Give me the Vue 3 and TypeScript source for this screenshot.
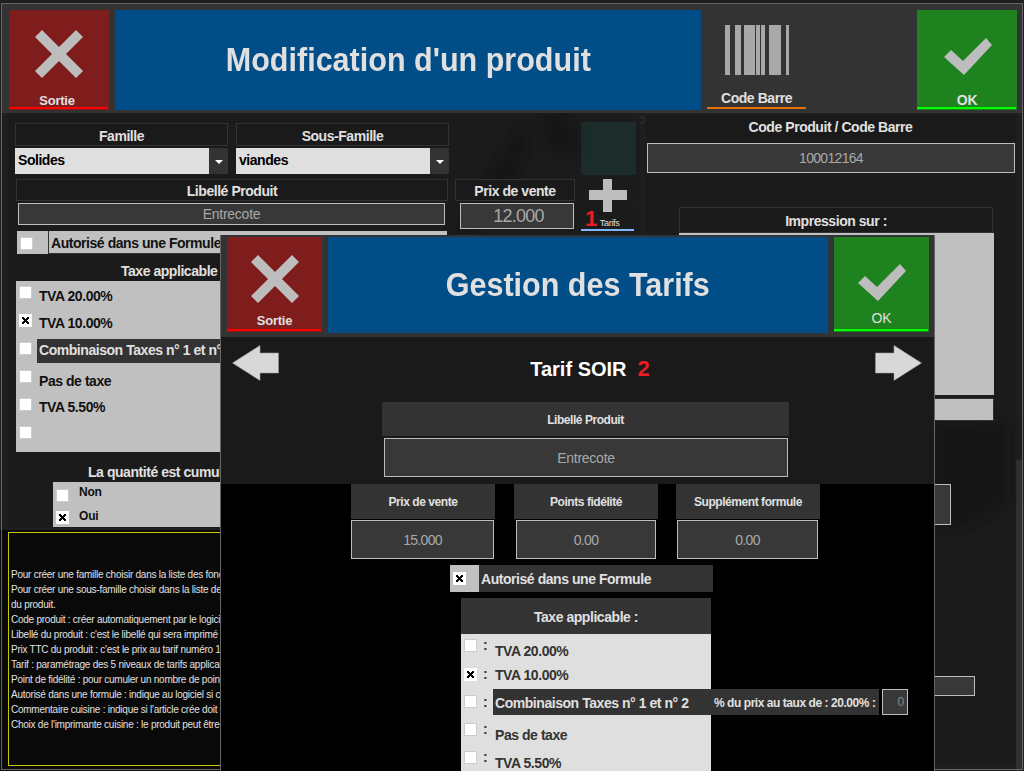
<script setup lang="ts">
interface TaxRow {
  label: string;
  checked?: boolean;
  dark?: boolean;
  dy: number;
}
interface TarifRow {
  label: string;
  checked?: boolean;
  combo?: boolean;
  height: number;
  dy: number;
  colon: number;
}

// pixel cross of the old windows checkbox
const crossPath =
  "M0 0h2v1h1v1h1V1h1V0h2v2H6v1H5v1h1v1h1v2H5V6H4V5H3v1H2v1H0V5h1V4h1V3H1V2H0z";

const taxes: TaxRow[] = [
  { label: "TVA 20.00%", dy: 2 },
  { label: "TVA 10.00%", checked: true, dy: 1 },
  { label: "Combinaison Taxes n° 1 et n° 2", dark: true, dy: -3 },
  { label: "Pas de taxe", dy: 3 },
  { label: "TVA 5.50%", dy: 1 },
  { label: "", dy: 1 },
];

const tarifTaxes: TarifRow[] = [
  { label: "TVA 20.00%", height: 29, dy: 4, colon: -2 },
  { label: "TVA 10.00%", checked: true, height: 27, dy: -1, colon: -2 },
  { label: "Combinaison Taxes n° 1 et n° 2", combo: true, height: 28, dy: -6, colon: -1 },
  { label: "Pas de taxe", height: 28, dy: 4, colon: -2 },
  { label: "TVA 5.50%", height: 28, dy: 4, colon: -2 },
];

const tarifFields = [
  { label: "Prix de vente", value: "15.000", cls: "f1" },
  { label: "Points fidélité", value: "0.00", cls: "f2" },
  { label: "Supplément formule", value: "0.00", cls: "f3" },
];

const helpLines = [
  "Pour créer une famille choisir dans la liste des fonctions",
  "Pour créer une sous-famille choisir dans la liste des familles",
  "du produit.",
  "Code produit : créer automatiquement par le logiciel",
  "Libellé du produit : c'est le libellé qui sera imprimé sur le ticket",
  "Prix TTC du produit : c'est le prix au tarif numéro 1",
  "Tarif : paramétrage des 5 niveaux de tarifs applicables",
  "Point de fidélité : pour cumuler un nombre de points",
  "Autorisé dans une formule : indique au logiciel si ce produit",
  "Commentaire cuisine : indique si l'article crée doit être commenté",
  "Choix de l'imprimante cuisine : le produit peut être imprimé",
];

const bars = [
  [0, 5],
  [10, 6],
  [19, 11],
  [31, 4],
  [36, 4],
  [44, 12],
  [61, 3],
];
</script>

<template>
  <div class="screen">
    <svg class="backdrop" width="1024" height="771" viewBox="0 0 1024 771">
      <defs>
        <filter id="soft"><feGaussianBlur stdDeviation="5" /></filter>
      </defs>
      <rect width="1024" height="771" fill="#1e1e1e" />
      <rect y="530" width="640" height="241" fill="#090909" />
      <rect x="1016" y="460" width="6" height="311" fill="#303030" />
      <g filter="url(#soft)" fill="#0c0c0c">
        <path d="M455 235 C480 190 495 150 520 125 C535 135 530 160 510 190 C500 215 480 230 455 235Z" />
        <path d="M545 110 C570 115 590 125 580 150 C565 170 545 150 535 130Z" />
        <path d="M930 420 C970 430 1000 410 1010 425 L1010 500 C990 520 960 540 930 530Z" />
      </g>
      <g fill="none" stroke="#333" stroke-width="1">
        <circle cx="626" cy="132" r="4" />
        <circle cx="636" cy="116" r="3" />
        <circle cx="634" cy="205" r="5" />
        <circle cx="642" cy="120" r="3" />
      </g>
    </svg>

    <div class="main">
      <header class="head">
        <div class="btn red">
          <svg class="icon" width="48" height="48" viewBox="0 0 48 48">
            <polygon fill="#bdbdbd" points="7,0 24,17 41,0 48,7 31,24 48,41 41,48 24,31 7,48 0,41 17,24 0,7" />
          </svg>
          <span class="btn-label">Sortie</span>
        </div>
        <h1 class="title"><span>Modification d'un produit</span></h1>
        <div class="btn code">
          <svg class="bars" width="64" height="50" viewBox="0 0 64 50">
            <rect v-for="b in bars" :key="b[0]" :x="b[0]" y="0" :width="b[1]" height="50" fill="#a8a8a8" />
          </svg>
          <span class="code-label">Code Barre</span>
        </div>
        <div class="btn green">
          <svg class="icon check" width="48" height="37" viewBox="0 0 48 37">
            <polygon fill="#bdbdbd" points="0,19 7,12 19,23 42,0 48,7 20,37" />
          </svg>
          <span class="btn-label ok">OK</span>
        </div>
      </header>

      <div class="body">
        <div class="left">
          <section class="panel">
            <div class="top">
              <div class="fields">
                <div class="combos">
                  <div v-for="c in [['Famille', 'Solides'], ['Sous-Famille', 'viandes']]" :key="c[0]" class="combo">
                    <div class="caption">{{ c[0] }}</div>
                    <div class="select">
                      <span class="select-value">{{ c[1] }}</span>
                      <span class="select-arrow"></span>
                    </div>
                  </div>
                </div>
                <div class="product">
                  <div class="product-name">
                    <div class="caption small">Libellé Produit</div>
                    <div class="input name-input">Entrecote</div>
                  </div>
                  <div class="product-price">
                    <div class="caption small">Prix de vente</div>
                    <div class="input price-input">12.000</div>
                  </div>
                </div>
              </div>
              <div class="tarif-col">
                <div class="teal"></div>
                <svg class="plus" width="38" height="33" viewBox="0 0 38 33">
                  <path fill="#bdbdbd" d="M14 0h9v11h15v10H23v12h-9V21H0V11h14z" />
                </svg>
                <div class="tarif-link"><b>1</b><span>Tarifs</span></div>
              </div>
            </div>

            <div class="allow">
              <span class="allow-box"><span class="cb"></span></span>
              <span class="allow-text">Autorisé dans une Formule</span>
            </div>

            <div class="tax-title">Taxe applicable :</div>
            <div class="tax-list">
              <div v-for="t in taxes" :key="t.label" class="tax-row">
                <span class="cb" :class="{ on: t.checked }">
                  <svg v-if="t.checked" width="7" height="7" viewBox="0 0 7 7" shape-rendering="crispEdges"><path :d="crossPath" /></svg>
                </span>
                <span class="tax-label" :class="{ dark: t.dark }" :style="{ marginTop: t.dy + 'px' }">{{ t.label }}</span>
              </div>
            </div>

            <div class="qty-title">La quantité est cumulable :</div>
            <div class="qty-list">
              <div class="qty-row"><span class="cb"></span><span class="qty-text">Non</span></div>
              <div class="qty-row">
                <span class="cb on">
                  <svg width="7" height="7" viewBox="0 0 7 7" shape-rendering="crispEdges"><path :d="crossPath" /></svg>
                </span>
                <span class="qty-text">Oui</span>
              </div>
            </div>
          </section>

          <section class="help">
            <p v-for="l in helpLines" :key="l">{{ l }}</p>
          </section>
        </div>

        <aside class="right">
          <div class="caption code-caption">Code Produit / Code Barre</div>
          <div class="input code-input">100012164</div>
          <div class="caption print-caption">Impression sur :</div>
          <div class="print-box"></div>
          <div class="print-foot"></div>
          <div class="input side-a"></div>
          <div class="input side-b"></div>
        </aside>
      </div>
    </div>

    <div class="modal">
      <header class="m-head">
        <div class="btn red m-btn">
          <svg class="m-icon" width="48" height="48" viewBox="0 0 48 48">
            <polygon fill="#bdbdbd" points="7,0 24,17 41,0 48,7 31,24 48,41 41,48 24,31 7,48 0,41 17,24 0,7" />
          </svg>
          <span class="btn-label m-label">Sortie</span>
        </div>
        <h2 class="m-title"><span>Gestion des Tarifs</span></h2>
        <div class="btn green m-btn">
          <svg class="m-icon m-check" width="48" height="37" viewBox="0 0 48 37">
            <polygon fill="#bdbdbd" points="0,19 7,12 19,23 42,0 48,7 20,37" />
          </svg>
          <span class="btn-label m-label m-ok">OK</span>
        </div>
      </header>

      <section class="m-top">
        <div class="nav">
          <svg width="47" height="36" viewBox="0 0 47 36">
            <polygon fill="#d8d8d8" stroke="#9a9a9a" stroke-width="0.6" points="0.5,18 28,0.5 28,8 46.5,8 46.5,28 28,28 28,35.5" />
          </svg>
          <div class="nav-title">Tarif SOIR<b>2</b></div>
          <svg width="47" height="36" viewBox="0 0 47 36">
            <polygon fill="#d8d8d8" stroke="#9a9a9a" stroke-width="0.6" points="46.5,18 19,0.5 19,8 0.5,8 0.5,28 19,28 19,35.5" />
          </svg>
        </div>
        <div class="m-caption lib">Libellé Produit</div>
        <div class="input m-input lib-input">Entrecote</div>
      </section>

      <section class="m-bottom">
        <div class="m-fields">
          <div v-for="f in tarifFields" :key="f.label" class="m-field" :class="f.cls">
            <div class="m-caption">{{ f.label }}</div>
            <div class="input m-input num">{{ f.value }}</div>
          </div>
        </div>

        <div class="m-allow">
          <span class="allow-box m-allow-box">
            <span class="cb on">
              <svg width="7" height="7" viewBox="0 0 7 7" shape-rendering="crispEdges"><path :d="crossPath" /></svg>
            </span>
          </span>
          <span class="m-allow-text">Autorisé dans une Formule</span>
        </div>

        <div class="m-tax">
          <div class="m-tax-title">Taxe applicable :</div>
          <div class="m-tax-list">
            <div
              v-for="t in tarifTaxes"
              :key="t.label"
              class="m-tax-row"
              :style="{ height: t.height + 'px' }"
            >
              <span class="cb" :class="{ on: t.checked }">
                <svg v-if="t.checked" width="7" height="7" viewBox="0 0 7 7" shape-rendering="crispEdges"><path :d="crossPath" /></svg>
              </span>
              <span class="colon" :style="{ marginTop: t.colon + 'px' }">:</span>
              <div v-if="t.combo" class="m-combo" :style="{ marginTop: t.dy + 'px' }">
                <span class="m-combo-label">{{ t.label }}</span>
                <span class="m-combo-rate">% du prix au taux de : 20.00% :</span>
              </div>
              <div v-if="t.combo" class="input m-rate" :style="{ marginTop: t.dy + 'px' }">0</div>
              <span v-else class="m-tax-label" :style="{ marginTop: t.dy + 'px' }">{{ t.label }}</span>
            </div>
          </div>
        </div>
      </section>
    </div>
  </div>
</template>

<style>
html,
body {
  margin: 0;
  background: #111;
}
</style>

<style scoped>
.screen {
  position: relative;
  width: 1024px;
  height: 771px;
  overflow: hidden;
  font-family: "Liberation Sans", Arial, sans-serif;
  color: #e0e0e0;
  letter-spacing: -0.45px;
}
.backdrop {
  position: absolute;
  top: 0;
  left: 0;
}
.main {
  position: relative;
  box-sizing: border-box;
  width: 1022px;
  height: 767px;
  margin: 3px 0 0 1px;
  border: 1px solid #666;
}

/* header */
.head {
  display: flex;
  box-sizing: border-box;
  height: 109px;
  padding: 6px 5px 0 7px;
  background: #333;
}
.btn {
  position: relative;
  display: flex;
  flex-direction: column;
  align-items: center;
  box-sizing: border-box;
  width: 100px;
  height: 100px;
  flex: none;
}
.btn::after {
  content: "";
  position: absolute;
  left: 0;
  right: 1px;
  bottom: 1px;
  height: 2px;
}
.red {
  background: #7f1d1d;
}
.red::after {
  background: #f00;
}
.green {
  background: #1e821e;
}
.green::after {
  background: #0f0;
}
.code {
  width: 99px;
  margin: 0 auto 0 6px;
}
.code::after {
  right: 0;
  background: #e87000;
}
.icon {
  margin-top: 20px;
}
.check {
  margin-top: 28px;
  margin-left: 2px;
}
.bars {
  margin: 15px 0 0 1px;
}
.btn-label {
  margin: 15px 4px 0 0;
  font-size: 13px;
  line-height: 16px;
  font-weight: bold;
  letter-spacing: -0.2px;
}
.ok {
  margin: 17px 0 0 0;
  font-size: 14px;
}
.code-label {
  margin-top: 15px;
  font-size: 14px;
  line-height: 16px;
  font-weight: bold;
}
.title {
  flex: none;
  width: 586px;
  height: 100px;
  margin: 0 0 0 6px;
  background: #004d87;
  font-size: 33px;
  line-height: 100px;
  text-align: center;
  font-weight: bold;
  letter-spacing: 0;
}
.title span,
.m-title span {
  display: inline-block;
  transform: scaleX(0.925);
}

/* body */
.body {
  display: flex;
  gap: 6px;
  padding-left: 6px;
}
.left {
  width: 632px;
  flex: none;
}
.panel {
  box-sizing: border-box;
  height: 415px;
  padding: 10px 0 0 7px;
  background: rgba(26, 26, 26, 0.72);
}
.top {
  display: flex;
}
.fields {
  width: 560px;
  flex: none;
}
.combos {
  display: flex;
  gap: 8px;
}
.combo {
  width: 213px;
}
.caption {
  box-sizing: border-box;
  height: 23px;
  border: 1px solid #333;
  background: #1a1a1a;
  font-size: 14px;
  line-height: 24px;
  font-weight: bold;
  text-align: center;
}
.small {
  height: 22px;
  line-height: 22px;
}
.select {
  display: flex;
  height: 26px;
  margin-top: 2px;
}
.select-value {
  flex: 1;
  padding-left: 3px;
  background: #dfdfdf;
  color: #000;
  font-size: 14px;
  line-height: 24px;
  font-weight: bold;
}
.select-arrow {
  position: relative;
  width: 19px;
  background: #333;
}
.select-arrow::before {
  content: "";
  position: absolute;
  left: 6px;
  top: 12px;
  border: 4px solid transparent;
  border-top: 4px solid #fff;
  border-bottom: 0;
}
.product {
  display: flex;
  margin-top: 5px;
  padding-left: 1px;
}
.product-name {
  width: 432px;
}
.product-price {
  width: 120px;
  margin-left: 7px;
}
.input {
  box-sizing: border-box;
  border: 1px solid #bdbdbd;
  background: #383838;
  color: #a8a8a8;
  text-align: center;
  letter-spacing: -0.25px;
}
.name-input {
  width: 427px;
  height: 22px;
  margin: 2px 0 0 2px;
  font-size: 14px;
  line-height: 21px;
}
.price-input {
  width: 114px;
  height: 26px;
  margin: 2px 0 0 5px;
  padding-left: 3px;
  font-size: 18px;
  line-height: 25px;
  letter-spacing: -0.8px;
}
.tarif-col {
  width: 55px;
  margin: -1px 0 0 6px;
}
.teal {
  height: 53px;
  background: rgba(30, 70, 66, 0.4);
}
.plus {
  display: block;
  margin: 4px 0 0 8px;
}
.tarif-link {
  display: flex;
  align-items: flex-end;
  box-sizing: border-box;
  width: 53px;
  height: 20px;
  margin-top: -1px;
  padding-left: 4px;
  border-bottom: 2px solid #80b8ff;
}
.tarif-link b {
  color: #ed1c24;
  font-size: 22px;
  line-height: 20px;
}
.tarif-link span {
  margin: 0 0 1px 3px;
  font-size: 9px;
  line-height: 10px;
  letter-spacing: -0.3px;
}
.allow {
  display: flex;
  width: 430px;
  height: 23px;
  margin: 0 0 0 2px;
  background: #c0c0c0;
}
.allow-box {
  display: flex;
  box-sizing: border-box;
  width: 31px;
  padding: 6px 0 0 3px;
  flex: none;
}
.allow-text {
  flex: 1;
  padding-left: 2px;
  border-left: 1px solid #333;
  border-bottom: 1px solid #333;
  color: #111;
  font-size: 14px;
  line-height: 24px;
  font-weight: bold;
}
.cb {
  display: flex;
  align-items: center;
  justify-content: center;
  box-sizing: border-box;
  width: 13px;
  height: 13px;
  flex: none;
  background: #fff;
  border: 1px solid #ccc;
}
.cb.on {
  border: 0;
}
.cb svg {
  display: block;
}
.tax-title {
  width: 314px;
  height: 27px;
  margin-left: 1px;
  font-size: 14px;
  line-height: 34px;
  font-weight: bold;
  text-align: center;
}
.tax-list {
  box-sizing: border-box;
  width: 420px;
  height: 171px;
  margin-left: 1px;
  padding: 5px 0 0 3px;
  background: #c0c0c0;
}
.tax-row {
  display: flex;
  height: 28px;
  color: #111;
  font-size: 14px;
  line-height: 16px;
  font-weight: bold;
}
.tax-label {
  height: 16px;
  margin-left: 7px;
}
.tax-label.dark {
  flex: 1;
  height: 24px;
  margin-left: 5px;
  padding-left: 2px;
  background: #333;
  color: #e0e0e0;
  line-height: 23px;
}
.qty-title {
  height: 30px;
  padding-left: 73px;
  font-size: 14px;
  line-height: 41px;
  font-weight: bold;
}
.qty-list {
  box-sizing: border-box;
  width: 300px;
  height: 45px;
  margin-left: 38px;
  padding: 0 0 0 3px;
  background: #c0c0c0;
  color: #111;
  font-size: 12px;
  font-weight: bold;
  letter-spacing: -0.2px;
}
.qty-row {
  display: flex;
  align-items: flex-end;
  gap: 10px;
  height: 22px;
}
.qty-row .cb {
  margin-bottom: 2px;
}
.qty-text {
  line-height: 20px;
  margin-bottom: 2px;
}
.qty-row + .qty-row .qty-text {
  margin-bottom: 0;
}
.help {
  box-sizing: border-box;
  width: 632px;
  height: 234px;
  margin-top: 4px;
  padding: 34px 0 0 2px;
  border: 1px solid #c8c800;
  font-size: 10px;
  line-height: 15px;
  letter-spacing: -0.25px;
  white-space: nowrap;
  overflow: hidden;
}
.help p {
  margin: 0;
}
.right {
  box-sizing: border-box;
  width: 370px;
  height: 650px;
  margin-top: 2px;
  padding-left: 1px;
  background: rgba(26, 26, 26, 0.72);
}
.code-caption {
  width: 369px;
  height: 25px;
  margin-left: -1px;
  border: 0;
  line-height: 25px;
}
.code-input {
  width: 368px;
  height: 30px;
  margin-top: 3px;
  font-size: 14px;
  line-height: 29px;
  letter-spacing: -0.7px;
}
.print-caption {
  width: 314px;
  height: 26px;
  margin: 34px 0 0 32px;
  line-height: 26px;
}
.print-box {
  width: 315px;
  height: 162px;
  margin-left: 32px;
  background: #c0c0c0;
}
.print-foot {
  box-sizing: border-box;
  width: 315px;
  height: 23px;
  margin: 3px 0 0 32px;
  background: #c0c0c0;
  border: 1px solid #333;
}
.side-a {
  width: 240px;
  height: 41px;
  margin: 63px 0 0 64px;
}
.side-b {
  width: 300px;
  height: 20px;
  margin: 151px 0 0 28px;
}

/* modal */
.modal {
  position: absolute;
  left: 220px;
  top: 235px;
  box-sizing: border-box;
  width: 715px;
  height: 536px;
  border-left: 1px solid #666;
  border-right: 1px solid #666;
  background: #000;
}
.m-head {
  display: flex;
  gap: 6px;
  box-sizing: border-box;
  height: 102px;
  padding: 2px 0 0 6px;
  background: #333;
}
.m-btn {
  width: 95px;
  height: 95px;
}
.m-icon {
  margin: 18px 0 0 0;
}
.m-check {
  margin-top: 27px;
  margin-left: 1px;
}
.m-label {
  margin: 10px 0 0 0;
}
.m-ok {
  margin-top: 9px;
  font-size: 14px;
  font-weight: normal;
}
.m-title {
  flex: none;
  width: 500px;
  height: 96px;
  margin: 0;
  background: #004d87;
  font-size: 33px;
  line-height: 96px;
  text-align: center;
  font-weight: bold;
  letter-spacing: 0;
}
.m-top {
  box-sizing: border-box;
  height: 147px;
  padding-top: 8px;
  background: #1a1a1a;
}
.nav {
  display: flex;
  justify-content: space-between;
  padding: 0 12px 0 11px;
}
.nav svg {
  display: block;
}
.nav-title {
  padding: 8px 0 0 26px;
  color: #fff;
  font-size: 20px;
  line-height: 32px;
  font-weight: bold;
  letter-spacing: 0;
}
.nav-title b {
  margin-left: 11px;
  color: #ed1c24;
  font-size: 22px;
}
.m-caption {
  height: 35px;
  background: #333;
  font-size: 12px;
  line-height: 36px;
  font-weight: bold;
  text-align: center;
}
.lib {
  width: 407px;
  height: 34px;
  margin: 17px 0 0 161px;
  line-height: 37px;
}
.m-input {
  height: 39px;
  margin-top: 2px;
  font-size: 14px;
  line-height: 38px;
}
.lib-input {
  width: 404px;
  margin-left: 163px;
}
.num {
  letter-spacing: -0.7px;
}
.m-fields {
  display: flex;
  padding-left: 130px;
}
.m-field {
  width: 144px;
}
.m-field .m-input {
  margin-top: 1px;
}
.f1 .m-input {
  width: 143px;
}
.f2 {
  margin-left: 19px;
}
.f2 .m-input {
  width: 140px;
  margin-left: 2px;
}
.f3 {
  margin-left: 18px;
}
.f3 .m-input {
  width: 141px;
  margin-left: 1px;
}
.m-allow {
  display: flex;
  width: 263px;
  height: 27px;
  margin: 6px 0 0 229px;
  background: #333;
}
.m-allow-box {
  width: 29px;
  padding: 7px 0 0 3px;
  background: #c0c0c0;
}
.m-allow-text {
  padding-left: 2px;
  font-size: 14px;
  line-height: 28px;
  font-weight: bold;
}
.m-tax {
  width: 250px;
  margin: 6px 0 0 240px;
}
.m-tax-title {
  height: 36px;
  background: #333;
  font-size: 14px;
  line-height: 38px;
  font-weight: bold;
  text-align: center;
}
.m-tax-list {
  height: 140px;
  padding: 5px 0 0 3px;
  box-sizing: border-box;
  background: #dfdfdf;
}
.m-tax-row {
  display: flex;
  color: #333;
  font-size: 14px;
  line-height: 16px;
  font-weight: bold;
}
.colon {
  width: 4px;
  height: 16px;
  margin-left: 6px;
}
.m-tax-label {
  height: 16px;
  margin-left: 8px;
}
.m-combo {
  display: flex;
  align-items: center;
  flex: none;
  box-sizing: border-box;
  width: 386px;
  height: 26px;
  margin-left: 6px;
  padding: 1px 0 0 2px;
  background: #333;
  color: #e0e0e0;
  white-space: nowrap;
}
.m-combo-label {
  width: 219px;
  flex: none;
}
.m-combo-rate {
  font-size: 12px;
}
.m-rate {
  flex: none;
  width: 26px;
  height: 26px;
  margin-left: 3px;
  padding-right: 3px;
  color: #888;
  font-size: 12px;
  font-weight: normal;
  line-height: 24px;
  text-align: right;
}
</style>
